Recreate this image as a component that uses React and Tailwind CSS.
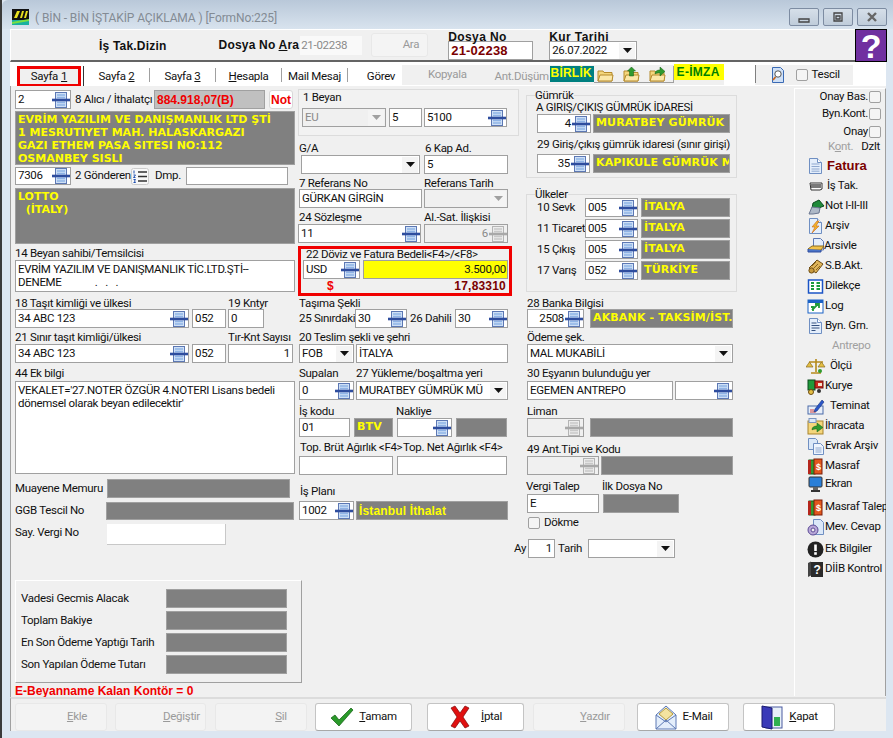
import React from "react";

const LB = "font-['Liberation_Sans',sans-serif]";

const Spin = ({ off }) => (
  <svg width="18" height="16" viewBox="0 0 18 16" className="shrink-0">
    <rect x="3.500" y="0.500" width="11" height="15" fill={off ? "#ececec" : "#cfe0f6"} stroke={off ? "#b4b4b4" : "#5c78b4"} />
    <path d="M5 3h8M5 5.500h8M5 10.500h8M5 13h8" stroke={off ? "#c8c8c8" : "#8fb4e6"} strokeWidth="1.300" />
    <rect x="0" y="6.700" width="18" height="2.600" fill={off ? "#a8a8a8" : "#2e4d9e"} />
  </svg>
);

const Arrow = ({ off }) => (
  <span className="w-[16px] h-[16px] bg-[#f4f4f4] flex items-center justify-center shrink-0">
    <svg width="9" height="5" viewBox="0 0 9 5"><path d="M0 0h9L4.500 5z" fill={off ? "#a0a0a0" : "#111"} /></svg>
  </span>
);

const Label = ({ c = "", children }) => <div className={`leading-[14px] whitespace-nowrap text-[#111] ${c}`}>{children}</div>;

const Input = ({ c = "", children }) => (
  <div className={`h-[19px] border border-[#a0a0a0] bg-white flex items-center px-[2px] text-[#111] whitespace-nowrap overflow-hidden shrink-0 ${c}`}>{children}</div>
);

const SpinField = ({ c = "", v, right, off }) => (
  <div className={`h-[19px] border border-[#a0a0a0] flex items-center pl-[2px] whitespace-nowrap overflow-hidden shrink-0 ${off ? "bg-[#f0f0f0] text-[#8a8a8a]" : "bg-white text-[#111]"} ${c}`}>
    <span className={`flex-1 min-w-0 ${right ? "text-right pr-[1px]" : ""}`}>{v}</span>
    <Spin off={off} />
  </div>
);

const Select = ({ c = "", v, off }) => (
  <div className={`h-[19px] border border-[#a0a0a0] flex items-center pl-[2px] pr-[1px] whitespace-nowrap overflow-hidden shrink-0 ${off ? "bg-[#f0f0f0] text-[#8a8a8a]" : "bg-white text-[#111]"} ${c}`}>
    <span className="flex-1 min-w-0 overflow-hidden">{v}</span>
    <Arrow off={off} />
  </div>
);

const Gray = ({ c = "", children }) => (
  <div className={`h-[19px] bg-[#808080] border border-[#a0a0a0] px-[2px] text-[#ffff00] font-bold text-[11px] tracking-[0.15px] whitespace-nowrap overflow-hidden flex items-center shrink-0 font-['DejaVu_Sans',sans-serif] ${c}`}>{children}</div>
);

const Check = ({ c = "" }) => <span className={`block w-[12px] h-[12px] border border-[#a0a0a0] bg-[#f4f4f4] rounded-[2px] shrink-0 ${c}`} />;

const Folder = ({ arrow }) => (
  <svg width="17" height="15" viewBox="0 0 17 15">
    <path d="M1 4h5l1 1.500h8V14H1z" fill="#f4d67c" stroke="#b58a2c" />
    <path d="M1 14l2-6h13l-1 6z" fill="#fbe7a8" stroke="#b58a2c" />
    {arrow === "up" && <path d="M8.500 0l4 4h-2v5h-4V4h-2z" fill="#2f9a2f" stroke="#155d15" strokeWidth=".5" />}
    {arrow === "right" && <path d="M6 7c0-3 2-4 5-4V0l5 4.500L11 9V6c-2 0-4 0-5 1z" fill="#2f9a2f" stroke="#155d15" strokeWidth=".5" />}
  </svg>
);

const Doc = ({ children }) => (
  <>
    <path d="M2.500.500h8l4 4v11h-12z" fill="#e4eefb" stroke="#6f8fc2" />
    <path d="M10.500.500v4h4" fill="#fff" stroke="#6f8fc2" />
    {children}
  </>
);
const Ic = ({ children, w = 17 }) => <svg width={w} height="17" viewBox={`0 0 ${w} 17`} className="shrink-0">{children}</svg>;

const icons = {
  fatura: <Ic><Doc><path d="M4.500 6h8M4.500 8.500h8M4.500 11h8M4.500 13.200h8" stroke="#8fa8cf" /></Doc></Ic>,
  istak: <Ic><path d="M3 5h12v6l-2 1H4z" fill="#fff" stroke="#333" /><path d="M5 6v4M7 6v4M9 6v4M11 6v4M13 6v4" stroke="#222" strokeWidth="1.200" /></Ic>,
  not: <Ic w="18"><path d="M4 16l2-11 6-3 5 6-8 3z" fill="#1f8a3a" stroke="#0b4a1d" /><path d="M2 16l3-7 8 1-1 5-6 1z" fill="#aeb9c8" stroke="#6a7690" /></Ic>,
  arsiv: <Ic><Doc /><path d="M10 3L5 9h3l-3 6 7-7H9l3-5z" fill="#f2b52c" stroke="#c9651b" strokeWidth=".6" /></Ic>,
  arsivle: <Ic w="18"><path d="M6.500.500h7l3 3V12h-10z" fill="#e4eefb" stroke="#5c78b4" /><path d="M1 11l4-3h12l-3 4H3z" fill="#f1c24b" stroke="#8a6a1e" /><path d="M1 11v3h13v-2" fill="#4a74c8" stroke="#2e4d9e" /></Ic>,
  sb: <Ic w="18"><path d="M2 10l8-8 6 4-7 9z" fill="#dfb458" stroke="#6e4c12" /><path d="M5 8l4-4M7 10l4-4M9 12l4-4" stroke="#8a6420" /><circle cx="4.500" cy="12.500" r="2.600" fill="#c89a3e" stroke="#6e4c12" /></Ic>,
  dilekce: <Ic><rect x="1.500" y="2" width="14" height="13" fill="#fff" stroke="#1b54c6" strokeWidth="1.500" /><path d="M4 5h3M4 8h3M4 11h3M9.500 5h3.500M9.500 8h3.500M9.500 11h3.500" stroke="#1a9a3a" strokeWidth="1.800" /></Ic>,
  log: <Ic><rect x="1" y="2" width="15" height="13" fill="#fff" stroke="#1b62c6" /><rect x="1" y="2" width="15" height="3" fill="#1b62c6" /><path d="M4 9h2v4M5 12l6-6M8 6h4v4" stroke="#1f9a3a" strokeWidth="1.800" fill="none" /></Ic>,
  byn: <Ic><Doc><path d="M4.500 5h5M4.500 7.500h8M4.500 10h8M4.500 12.500h4" stroke="#34507f" /></Doc></Ic>,
  olcu: <Ic w="20"><path d="M10 1v13M3 4h14M5 15h10" stroke="#b58a1c" strokeWidth="1.600" /><path d="M0 9h7L3.500 4zM12 9h7l-3.500-5z" fill="#e4bf44" stroke="#8a6a1e" strokeWidth=".7" /><circle cx="14" cy="13" r="2" fill="#2f9a2f" /></Ic>,
  kurye: <Ic w="18"><rect x="1" y="2" width="7" height="10" fill="#1f9a3a" stroke="#0b4a1d" /><rect x="8" y="3" width="8" height="7" fill="#c92a1e" stroke="#6e120c" /><rect x="11" y="5" width="4" height="3" fill="#f7e4cc" /><circle cx="4" cy="14" r="2.500" fill="#e4bf44" stroke="#6e4c12" /><circle cx="12" cy="13" r="2" fill="#333" /></Ic>,
  teminat: <Ic w="18"><rect x="1" y="8" width="15" height="8" fill="#e8eef8" stroke="#4a6aa8" /><path d="M3 12h4M3 14h6" stroke="#d04040" /><path d="M8 11l7-9 2 2-7 9-3 1z" fill="#2a55c8" stroke="#17347c" strokeWidth=".6" /></Ic>,
  ihracat: <Ic w="18"><rect x="1" y="3" width="15" height="13" fill="#f4d67c" stroke="#a8832c" /><rect x="2" y="0.500" width="7" height="4" fill="#dbe8f8" stroke="#7a94c0" /><path d="M5 12c0-3 2-4 5-4V5l6 4.500L10 14v-3c-2 0-4 0-5 1z" fill="#2f9a2f" stroke="#155d15" strokeWidth=".5" /></Ic>,
  evrak: <Ic w="18"><path d="M1.500.500h7l2 2v9h-9z" fill="#dbe8f8" stroke="#6f8fc2" /><path d="M6.500 5.500h7l3 3v8h-10z" fill="#eef4fd" stroke="#6f8fc2" /><path d="M8.500 10h6M8.500 12h6M8.500 14h6" stroke="#8fa8cf" /></Ic>,
  masraf: <Ic><rect x="2" y="2" width="6" height="14" fill="#2f9a2f" stroke="#155d15" /><rect x="7" y="1" width="8" height="15" fill="#e2571e" stroke="#7a1e0a" /><rect x="1" y="2" width="3" height="14" fill="#b5261c" /><text x="9" y="12" fontSize="9" fontWeight="700" fill="#fff" fontFamily="Liberation Sans">$</text></Ic>,
  ekran: <Ic><rect x="2" y="1" width="13" height="10" rx="1" fill="#2a7fd8" stroke="#333" /><rect x="6" y="11" width="5" height="3" fill="#666" /><rect x="4" y="14" width="9" height="2" fill="#333" /></Ic>,
  mev: <Ic w="18"><path d="M6.500.500h7l3 3v12h-10z" fill="#dbe8f8" stroke="#6f8fc2" /><circle cx="6" cy="11" r="5" fill="#b8a8d8" stroke="#5c4a96" /><circle cx="6" cy="11" r="2" fill="#eee" stroke="#5c4a96" /></Ic>,
  ek: <Ic><circle cx="8.500" cy="8.500" r="8" fill="#222" /><rect x="7.200" y="3.500" width="2.600" height="6.500" fill="#fff" /><rect x="7.200" y="11.200" width="2.600" height="2.600" fill="#fff" /></Ic>,
  diib: <Ic><path d="M1 2l3-1.500v14L1 16z" fill="#444" /><rect x="4" y="1" width="12" height="15" fill="#2a2a2a" /><text x="6.500" y="13" fontSize="12" fontWeight="700" fill="#fff" fontFamily="Liberation Sans">?</text></Ic>,
};

const side = [
  ["mt-[3px]", "fatura", <span className={`font-bold text-[#7b0000] text-[13px] tracking-normal ${LB}`}>Fatura</span>, 18],
  ["", "istak", "İş Tak.", 18],
  ["", "not", "Not I-II-III", 14],
  ["", "arsiv", "Arşiv", 16],
  ["", "arsivle", "Arsivle", 13],
  ["", "sb", "S.B.Akt.", 14],
  ["", "dilekce", "Dilekçe", 16],
  ["", "log", "Log", 16],
  ["", "byn", "Byn. Grn.", 16],
  ["", null, <span className="text-[#a0a0a0] pl-[7px]">Antrepo</span>, 16],
  ["", "olcu", <span className="pl-[5px]">Ölçü</span>, 14],
  ["", "kurye", "Kurye", 14],
  ["", "teminat", <span className="pl-[3px]">Teminat</span>, 18],
  ["", "ihracat", "İhracata", 15],
  ["", "evrak", "Evrak Arşiv", 15],
  ["", "masraf", "Masraf", 16],
  ["-mt-[2px]", "ekran", "Ekran", 16],
  ["mt-[3px]", "masraf", "Masraf Talep", 16],
  ["", "mev", "Mev. Cevap", 14],
  ["mt-[2px]", "ek", "Ek Bilgiler", 16],
  ["", "diib", "DİİB Kontrol", 16],
];

const Btn = ({ c = "", off, icon, children }) => (
  <div className={`h-[28px] rounded-[3px] border flex items-center justify-center gap-[5px] shrink-0 ${off ? "bg-[#f3f3f3] border-[#e8e8e8] text-[#9a9a9a]" : "bg-white border-[#c4c4c4] border-b-[#a8a8a8] text-[#111]"} ${c}`}>
    {icon}
    <span>{children}</span>
  </div>
);

const Group = ({ title, c = "", children }) => (
  <div className={`relative border border-[#dcdcdc] ${c}`}>
    <span className="absolute -top-[8px] left-[8px] bg-[#f0f0f0] leading-[14px] text-[#111]">{title}</span>
    {children}
  </div>
);

export default function App() {
  return (
    <div className="w-[893px] h-[738px] overflow-hidden flex bg-[#dce6f1] font-['Roboto',sans-serif] text-[11.5px] tracking-[-0.3px] text-[#111]">
      <div className="w-[2px] h-full bg-[#3a3a3a]" />
      <div className="w-[891px] h-full flex flex-col">
        {/* title bar */}
        <div className="h-[29px] shrink-0 flex items-start bg-gradient-to-b from-[#b9c8d9] to-[#d8e3ee] rounded-tl-[6px]">
          <svg width="17" height="16" viewBox="0 0 17 16" className="ml-[10px] mt-[9px] shrink-0">
            <rect width="17" height="11" fill="#111" />
            <path d="M0 11h17v5H0z" fill="#19b0a0" />
            <path d="M2 9l3-7h3L5 9zM8 9l2-7h2l-2 7zM12 9l2-7h2l-2 7z" fill="#e8e020" />
            <path d="M0 13l17-3v2L0 15z" fill="#7adf40" />
          </svg>
          <span className="ml-[6px] mt-[10px] text-[12px] tracking-[-0.1px] leading-[16px] text-[#838b94] whitespace-nowrap">( BİN - BİN İŞTAKİP AÇIKLAMA ) [FormNo:225]</span>
          <div className="ml-auto mr-[6px] mt-[8px] flex gap-[4px]">
            {["M5 10h10v3H5z", "M6 4h8v8H6zM8 7h4v3H8z", "M6 4l8 8M14 4l-8 8"].map((d, i) => (
              <div key={i} className="w-[30px] h-[18px] rounded-[2px] border border-[#7d8ca2] bg-gradient-to-b from-[#d6dfe9] to-[#bfccda] flex items-center justify-center">
                <svg width="20" height="16" viewBox="0 0 20 16"><path d={d} fill="none" stroke={i === 2 ? "#666" : "#444"} strokeWidth={i === 2 ? 2.400 : 1.300} /></svg>
              </div>
            ))}
          </div>
        </div>

        <div className="flex-1 flex flex-col ml-[8px] mr-[7px] min-h-0">
          {/* top toolbar */}
          <div className={`h-[33px] shrink-0 bg-[#f0f0f0] border-l border-t border-white border-b-2 border-b-[#646464] flex items-start font-bold text-[12px] ${LB}`}>
            <span className="ml-[88px] mt-[9px] leading-[14px] tracking-[0.2px]">İş Tak.Dizin</span>
            <span className="ml-[52px] mt-[8px] leading-[14px] tracking-[0.2px]">Dosya No <u>A</u>ra</span>
            <div className="ml-[1px] mt-[6px] w-[62px] h-[19px] bg-[#f9f9f9] font-normal text-[#8a8a8a] text-[11.5px] leading-[18px] pl-[1px] font-['Roboto',sans-serif]">21-02238</div>
            <div className="ml-[9px] mt-[3px] w-[57px] h-[24px] rounded-[3px] bg-[#f4f4f4] border border-[#e8e8e8] font-normal text-[#9a9a9a] text-[11.5px] flex items-center justify-end pr-[8px] font-['Roboto',sans-serif]">Ara</div>
            <div className="ml-[20px] w-[85px] shrink-0">
              <div className="leading-[14px] mt-[-1px] pt-[1px] tracking-[0.4px]">Dosya No</div>
              <div className="w-[85px] h-[19px] bg-white border border-[#a0a0a0] text-[#7b0000] text-[13px] leading-[17px] pl-[2px] mt-[-3px] tracking-[0.2px]">21-02238</div>
            </div>
            <div className="ml-[16px] w-[88px] shrink-0">
              <div className="leading-[14px] mt-[-1px] pt-[1px] tracking-[0.4px]">Kur Tarihi</div>
              <div className="mt-[-3px]"><Select c="w-[88px] font-normal text-[#111] text-[11.5px] tracking-[-0.3px] font-['Roboto',sans-serif]" v="26.07.2022" /></div>
            </div>
            <div className="ml-auto mr-[-1px] mt-[-1px] w-[32px] h-[33px] bg-[#7030a0] border border-black flex items-center justify-center text-white text-[34px] leading-none font-bold">?</div>
          </div>

          {/* tabs */}
          <div className="h-[24px] shrink-0 bg-white flex items-start">
            <div className="w-[392px] h-[24px] flex items-start shrink-0">
              <div className="ml-[7px] mt-[4px] w-[64px] h-[21px] border-[3px] border-[#f00000] bg-[#f0f0f0] flex items-center justify-center whitespace-nowrap">Sayfa <u className="ml-[3px]">1</u></div>
              <div className="ml-[2px] mt-[4px] w-[1px] h-[20px] bg-[#333]" />
              {[["Sayfa ", "2", ""], ["Sayfa ", "3", ""], ["", "H", "esapla"]].map((t, i) => (
                <React.Fragment key={i}>
                  <div className="w-[65px] mt-[5px] h-[19px] flex items-center justify-center whitespace-pre">{t[0]}<u>{t[1]}</u>{t[2]}</div>
                  <div className="mt-[6px] w-[1px] h-[14px] bg-[#a0a0a0]" />
                </React.Fragment>
              ))}
              <div className="w-[65px] mt-[5px] h-[19px] flex items-center justify-center whitespace-nowrap">Mail Mesaj</div>
              <div className="mt-[6px] w-[1px] h-[14px] bg-[#a0a0a0]" />
              <div className="w-[54px] mt-[5px] h-[19px] pl-[12px] flex items-center justify-center">Görev</div>
            </div>
            <div className="h-[20px] mt-[3px] flex-1 flex items-start bg-[#f0f0f0] text-[#9a9a9a]">
              <span className="ml-[26px] mt-[1px] leading-[16px]">Kopyala</span>
              <span className="ml-[28px] mt-[3px] w-[53px] shrink-0 leading-[16px] whitespace-nowrap">Ant.Düşüm</span>
              <div className={`ml-[2px] w-[44px] h-[16px] mt-[1px] bg-[#008080] text-[#ffff00] font-bold text-[12px] leading-[15px] pl-[1px] tracking-[0.2px] ${LB}`}>BİRLİK</div>
              <div className="w-[80px] h-[17px] mt-[1px] border-r border-b border-[#a0a0a0] flex items-center gap-[9px] pl-[3px]">
                <Folder /><Folder arrow="up" /><Folder arrow="right" />
              </div>
              <div className={`w-[50px] h-[16px] -mt-[1px] bg-[#ffff00] text-[#008000] font-bold text-[12px] leading-[16px] pl-[3px] tracking-[0.3px] whitespace-nowrap ${LB}`}>E-İMZA</div>
              <div className="w-[31px] h-[20px] bg-white" />
              <div className="w-[1px] h-[18px] bg-[#808080]" />
              <div className="w-[97px] h-[19px] flex items-center pl-[14px] text-[#111]">
                <svg width="16" height="16" viewBox="0 0 16 16" className="shrink-0"><path d="M2.500.500h8l3 3v12h-11z" fill="#cfe0f6" stroke="#3a6ab4" /><circle cx="8" cy="7" r="3.200" fill="#fff" stroke="#555" /><path d="M5.500 10L3 13" stroke="#c9651b" strokeWidth="1.800" /></svg>
                <Check c="ml-[10px]" />
                <span className="ml-[4px]">Tescil</span>
              </div>
              <div className="flex-1 h-[20px] bg-white" />
            </div>
          </div>

          {/* body */}
          <div className="h-[611px] shrink-0 bg-[#f0f0f0] border-l border-[#a0a0a0] flex items-start overflow-hidden">
            {/* column 1 */}
            <div className="w-[280px] ml-[4px] pt-[4px] shrink-0">
              <div className="flex items-center h-[19px]">
                <SpinField c="w-[56px]" v="2" />
                <span className="ml-[4px] w-[79px] shrink-0 whitespace-nowrap">8 Alıcı / İthalatçı</span>
                <div className={`w-[111px] h-[19px] bg-[#c0c0c0] border border-[#a0a0a0] text-[#f00000] font-bold text-[12px] tracking-normal flex items-center pl-[2px] whitespace-nowrap shrink-0 ${LB}`}>884.918,07(B)</div>
                <div className={`ml-[4px] w-[24px] h-[19px] border border-[#d8d8d8] rounded-[3px] bg-white text-[#f00000] font-bold text-[12px] tracking-normal flex items-center justify-center shrink-0 ${LB}`}>Not</div>
              </div>
              <div className="mt-[2px] h-[54px] bg-[#808080] border border-[#a0a0a0] pl-[2px] pt-[1px] text-[#ffff00] font-bold text-[11px] tracking-normal leading-[13px] whitespace-pre font-['DejaVu_Sans',sans-serif]">{"EVRİM YAZILIM VE DANIŞMANLIK LTD ŞTİ\n1 MESRUTIYET MAH. HALASKARGAZI\nGAZI ETHEM PASA SITESI NO:112\nOSMANBEY SISLI"}</div>
              <div className="mt-[2px] flex items-center h-[18px]">
                <SpinField c="w-[56px] !h-[18px]" v="7306" />
                <span className="ml-[4px] whitespace-nowrap w-[56px] shrink-0">2 Gönderen</span>
                <svg width="18" height="17" viewBox="0 0 18 17" className="shrink-0"><rect x=".5" y=".5" width="17" height="16" rx="2" fill="#f8f8f8" stroke="#ccc" /><path d="M7 4h9M7 8.500h9M7 13h9" stroke="#333" strokeWidth="1.400" /><path d="M3 2.500v3M2.500 7h2l-2 2.500h2M2.500 11.500h2l-1 1.500 1 1.500h-2" stroke="#2050b0" fill="none" /></svg>
                <span className="ml-[6px] w-[31px] shrink-0">Dmp.</span>
                <Input c="!h-[18px] w-[102px]" />
              </div>
              <div className="mt-[3px] h-[56px] bg-[#808080] border border-[#a0a0a0] pl-[2px] pt-[1px] text-[#ffff00] font-bold text-[11px] tracking-normal leading-[13px] whitespace-pre font-['DejaVu_Sans',sans-serif]">{"LOTTO\n  (İTALY)"}</div>
              <Label c="mt-[2px] h-[14px]">14 Beyan sahibi/Temsilcisi</Label>
              <div className="h-[32px] bg-white border border-[#a0a0a0] px-[2px] py-[2px] leading-[13px] whitespace-pre overflow-hidden">{"EVRİM YAZILIM VE DANIŞMANLIK TİC.LTD.ŞTİ--\nDENEME             .   .   ."}</div>
              <div className="mt-[4px] flex h-[13px]">
                <Label c="w-[213px]">18 Taşıt kimliği ve ülkesi</Label>
                <Label>19 Kntyr</Label>
              </div>
              <div className="flex items-center h-[19px]">
                <SpinField c="w-[174px]" v="34 ABC 123" />
                <Input c="w-[34px] ml-[3px]">052</Input>
                <Input c="w-[36px] ml-[2px]">0</Input>
              </div>
              <div className="mt-[2px] flex h-[14px]">
                <Label c="w-[213px]">21 Sınır taşıt kimliği/ülkesi</Label>
                <Label>Tır-Knt Sayısı</Label>
              </div>
              <div className="flex items-center h-[19px]">
                <SpinField c="w-[174px]" v="34 ABC 123" />
                <Input c="w-[34px] ml-[3px]">052</Input>
                <Input c="w-[65px] ml-[2px] justify-end">1</Input>
              </div>
              <Label c="mt-[3px] h-[15px]">44 Ek bilgi</Label>
              <div className="h-[93px] bg-white border border-[#a0a0a0] px-[2px] pt-[2px] leading-[13px]">VEKALET='27.NOTER ÖZGÜR 4.NOTERI Lisans bedeli dönemsel olarak beyan edilecektir'</div>
              <div className="mt-[5px] flex items-center h-[19px]">
                <span className="w-[92px] shrink-0 whitespace-nowrap">Muayene Memuru</span>
                <Gray c="w-[183px]" />
              </div>
              <div className="mt-[4px] flex items-center h-[18px]">
                <span className="w-[91px] shrink-0 whitespace-nowrap">GGB Tescil No</span>
                <Gray c="w-[188px] !h-[18px]" />
              </div>
              <div className="mt-[4px] flex items-start h-[21px]">
                <span className="w-[92px] shrink-0 whitespace-nowrap leading-[16px]">Say. Vergi No</span>
                <div className="w-[119px] h-[21px] bg-white border-b border-r border-[#c8c8c8]" />
              </div>
              <div className="mt-[35px] w-[287px] h-[103px] border-l border-t border-white border-r border-b border-r-[#a0a0a0] border-b-[#a0a0a0] pt-[8px] pl-[5px]">
                {["Vadesi Gecmis Alacak", "Toplam Bakiye", "En Son Ödeme Yaptığı Tarih", "Son Yapılan Ödeme Tutarı"].map((t, i) => (
                  <div key={i} className="flex items-center h-[19px] mb-[3px]">
                    <span className="w-[145px] shrink-0 whitespace-nowrap">{t}</span>
                    <Gray c="w-[121px]" />
                  </div>
                ))}
              </div>
              <div className={`mt-[1px] h-[14px] leading-[14px] text-[#f00000] font-bold text-[12px] tracking-normal whitespace-nowrap ${LB}`}>E-Beyanname Kalan Kontör = 0</div>
            </div>

            {/* column 2 */}
            <div className="w-[221px] ml-[3px] pt-[3px] shrink-0">
              <div className="h-[47px] border border-[#dcdcdc] bg-[#f2f2f2]">
                <Label c="ml-[4px] h-[14px]">1 Beyan</Label>
                <div className="mt-[4px] flex ml-[3px]">
                  <Select c="w-[84px]" v="EU" off />
                  <Input c="w-[33px] ml-[3px]">5</Input>
                  <SpinField c="w-[83px] ml-[2px]" v="5100" />
                </div>
              </div>
              <div className="mt-[5px] flex h-[14px]">
                <Label c="w-[126px] ml-[1px]">G/A</Label>
                <Label>6 Kap Ad.</Label>
              </div>
              <div className="flex">
                <Select c="w-[119px] ml-[3px]" v="" />
                <Input c="w-[84px] ml-[4px]">5</Input>
              </div>
              <div className="mt-[2px] flex h-[13px]">
                <Label c="w-[125px] ml-[1px]">7 Referans No</Label>
                <Label>Referans Tarih</Label>
              </div>
              <div className="flex ml-[1px]">
                <Input c="w-[123px]">GÜRKAN GİRGİN</Input>
                <Select c="w-[84px] ml-[2px]" v="" off />
              </div>
              <div className="mt-[2px] flex h-[14px]">
                <Label c="w-[125px] ml-[1px]">24 Sözleşme</Label>
                <Label>Al.-Sat. İlişkisi</Label>
              </div>
              <div className="flex">
                <SpinField c="w-[123px]" v="11" />
                <SpinField c="w-[84px] ml-[3px]" v="6" right off />
              </div>
              <div className="mt-[3px] w-[214px] h-[50px] border-[3px] border-[#f00000]">
                <div className="h-[11px] pl-[5px] leading-[10px] whitespace-nowrap">22 Döviz ve Fatura Bedeli&lt;F4&gt;/&lt;F8&gt;</div>
                <div className="flex ml-[2px]">
                  <SpinField c="w-[57px]" v="USD" />
                  <div className="ml-[3px] w-[145px] h-[19px] bg-[#ffff00] border border-[#a0a0a0] text-right pr-[1px] leading-[17px]">3.500,00</div>
                </div>
                <div className={`flex items-center justify-between h-[14px] pl-[26px] pr-[3px] tracking-normal ${LB}`}>
                  <span className="text-[#f00000] font-bold text-[12px] leading-[14px]">$</span>
                  <span className="text-[#7b0000] font-bold text-[12px] tracking-[0.2px] leading-[14px]">17,83310</span>
                </div>
              </div>
              <Label c="h-[13px] ml-[1px]">Taşıma Şekli</Label>
              <div className="flex items-center ml-[1px] h-[19px]">
                <span className="w-[56px] shrink-0 whitespace-nowrap">25 Sınırdaki</span>
                <SpinField c="w-[52px]" v="30" />
                <span className="ml-[3px] w-[45px] shrink-0 whitespace-nowrap">26 Dahili</span>
                <SpinField c="w-[53px]" v="30" />
              </div>
              <Label c="mt-[2px] h-[14px] ml-[1px]">20 Teslim şekli ve şehri</Label>
              <div className="flex ml-[1px]">
                <Select c="w-[55px]" v="FOB" />
                <Input c="w-[152px] ml-[2px]">İTALYA</Input>
              </div>
              <div className="mt-[3px] flex h-[15px] ml-[1px]">
                <Label c="w-[57px]">Supalan</Label>
                <Label>27 Yükleme/boşaltma yeri</Label>
              </div>
              <div className="flex ml-[1px]">
                <SpinField c="w-[55px]" v="0" />
                <Select c="w-[152px] ml-[2px]" v="MURATBEY GÜMRÜK MÜ" />
              </div>
              <div className="mt-[4px] flex h-[14px] ml-[1px]">
                <Label c="w-[97px]">İş kodu</Label>
                <Label>Nakliye</Label>
              </div>
              <div className="flex ml-[1px]">
                <Input c="w-[51px]">01</Input>
                <Gray c="w-[39px] ml-[4px]">BTV</Gray>
                <SpinField c="w-[55px] ml-[4px]" v="" />
                <Gray c="w-[51px] ml-[4px]" />
              </div>
              <div className="mt-[3px] flex h-[16px] ml-[2px]">
                <Label c="w-[103px]">Top. Brüt Ağırlık &lt;F4&gt;</Label>
                <Label>Top. Net Ağırlık &lt;F4&gt;</Label>
              </div>
              <div className="flex ml-[1px]">
                <Input c="w-[94px]" />
                <Input c="w-[110px] ml-[4px]" />
              </div>
              <Label c="mt-[9px] h-[17px] ml-[2px]">İş Planı</Label>
              <div className="flex ml-[1px]">
                <SpinField c="w-[55px]" v="1002" />
                <Gray c="w-[152px] ml-[2px] !font-['Liberation_Sans',sans-serif] !text-[12px]">İstanbul İthalat</Gray>
              </div>
            </div>

            {/* column 3 */}
            <div className="w-[211px] ml-[7px] pt-[9px] shrink-0">
              <Group title="Gümrük" c="h-[83px] pt-[4px]">
                <Label c="ml-[9px] h-[14px]">A GİRİŞ/ÇIKIŞ GÜMRÜK İDARESİ</Label>
                <div className="flex ml-[10px]">
                  <SpinField c="w-[54px]" v="4" right />
                  <Gray c="w-[137px] ml-[2px]">MURATBEY GÜMRÜK MÜDÜRLÜĞÜ</Gray>
                </div>
                <Label c="ml-[10px] mt-[4px] h-[14px]">29 Giriş/çıkış gümrük idaresi (sınır girişi)</Label>
                <div className="flex ml-[10px] mt-[3px]">
                  <SpinField c="w-[53px]" v="35" right />
                  <Gray c="w-[137px] ml-[3px]">KAPIKULE GÜMRÜK MÜDÜRLÜĞÜ</Gray>
                </div>
              </Group>
              <Group title="Ülkeler" c="mt-[16px] h-[98px] pt-[3px]">
                {[["10 Sevk", "005", "İTALYA"], ["11 Ticaret", "005", "İTALYA"], ["15 Çıkış", "005", "İTALYA"], ["17 Varış", "052", "TÜRKİYE"]].map((r, i) => (
                  <div key={i} className="flex items-center h-[19px] mb-[2px] ml-[10px]">
                    <span className="w-[48px] shrink-0 whitespace-nowrap">{r[0]}</span>
                    <SpinField c="w-[53px]" v={r[1]} />
                    <Gray c="w-[89px] ml-[3px]">{r[2]}</Gray>
                  </div>
                ))}
              </Group>
              <Label c="mt-[4px] h-[13px] ml-[1px]">28 Banka Bilgisi</Label>
              <div className="flex ml-[1px]">
                <SpinField c="w-[57px]" v="2508" right />
                <Gray c="w-[143px] ml-[6px]">AKBANK - TAKSİM/İST.</Gray>
              </div>
              <Label c="mt-[2px] h-[14px] ml-[1px]">Ödeme şek.</Label>
              <Select c="w-[206px] ml-[1px]" v="MAL MUKABİLİ" />
              <Label c="mt-[3px] h-[15px] ml-[1px]">30 Eşyanın bulunduğu yer</Label>
              <div className="flex ml-[1px]">
                <Input c="w-[146px]">EGEMEN ANTREPO</Input>
                <SpinField c="w-[58px] ml-[2px]" v="" />
              </div>
              <Label c="mt-[4px] h-[14px] ml-[1px]">Liman</Label>
              <div className="flex ml-[1px]">
                <SpinField c="w-[57px]" v="" off />
                <Gray c="w-[143px] ml-[6px]" />
              </div>
              <Label c="mt-[5px] h-[14px] ml-[1px]">49 Ant.Tipi ve Kodu</Label>
              <div className="flex ml-[1px]">
                <SpinField c="w-[72px]" v="" off />
                <Gray c="w-[132px] ml-[2px]" />
              </div>
              <div className="mt-[4px] flex h-[15px]">
                <Label c="w-[76px]">Vergi Talep</Label>
                <Label>İlk Dosya No</Label>
              </div>
              <div className="flex ml-[1px]">
                <Input c="w-[72px]">E</Input>
                <Gray c="w-[76px] ml-[4px]" />
              </div>
              <div className="mt-[4px] flex items-center ml-[2px] h-[12px]">
                <Check />
                <span className="ml-[4px]">Dökme</span>
              </div>
              <div className="mt-[10px] flex items-center -ml-[12px] h-[19px]">
                <span className="w-[14px] shrink-0">Ay</span>
                <Input c="w-[27px] justify-end">1</Input>
                <span className="ml-[3px] w-[30px] shrink-0">Tarih</span>
                <Select c="w-[87px]" v="" />
              </div>
            </div>

            {/* sidebar */}
            <div className="ml-[57px] mt-[2px] w-[92px] h-[608px] border-l border-t border-white border-r border-r-[#a0a0a0] shrink-0">
              <div className="flex items-center justify-end pr-[4px] h-[13px] mt-[1px] gap-[1px]"><span>Onay Bas.</span><Check /></div>
              <div className="flex items-center justify-end pr-[4px] h-[13px] mt-[4px] gap-[1px]"><span>Byn.Kont.</span><Check /></div>
              <div className="flex items-center justify-end pr-[4px] h-[13px] mt-[5px] gap-[1px]"><span>Onay</span><Check /></div>
              <div className="flex items-center h-[13px] mt-[2px] pl-[33px]"><span className="text-[#a0a0a0]">K<u>o</u>nt.</span><span className="ml-[8px]">Dzlt</span></div>
              {side.map((s, i) => (
                <div key={i} className={`flex items-center h-[20px] pl-[12px] whitespace-nowrap ${s[0]}`}>
                  <span className="w-[17px] flex justify-center shrink-0">{s[1] && icons[s[1]]}</span>
                  <span className={s[3] === 18 ? "ml-[3px]" : s[3] === 13 ? "ml-[0px]" : "ml-[1px]"}>{s[2]}</span>
                </div>
              ))}
            </div>
          </div>

          {/* buttons */}
          <div className="h-[34px] shrink-0 bg-[#f0f0f0] border-t-2 border-[#dcdcdc] border-l border-l-[#a0a0a0] flex items-start pt-[4px] pl-[4px]">
            <Btn c="w-[92px] pl-[32px]" off><u>E</u>kle</Btn>
            <Btn c="w-[91px] ml-[8px] pl-[42px]" off><u>D</u>eğiştir</Btn>
            <Btn c="w-[92px] ml-[9px] pl-[40px]" off><u>S</u>il</Btn>
            <Btn c="w-[97px] ml-[8px]" icon={<svg width="24" height="20" viewBox="0 0 24 20"><path d="M1 11l4-3 4 5L21 1l2 2L9 19z" fill="#2a9a2a" stroke="#0f5a0f" strokeWidth=".7" /></svg>}><u>T</u>amam</Btn>
            <Btn c="w-[97px] ml-[15px]" icon={<svg width="22" height="24" viewBox="0 0 22 24" className="mr-[5px]"><path d="M2 3l4-2 5 7 5-7 4 2-6 9 6 9-4 2-5-7-5 7-4-2 6-9z" fill="#e01010" stroke="#7a0808" strokeWidth=".7" /></svg>}><u>İ</u>ptal</Btn>
            <Btn c="w-[92px] ml-[9px] pl-[32px]" off><u>Y</u>azdır</Btn>
            <Btn c="w-[92px] ml-[12px]" icon={<svg width="24" height="26" viewBox="0 0 24 26"><path d="M2 11l10-9 10 9v14H2z" fill="#e4eefb" stroke="#5c78b4" /><path d="M5 10l7-6 7 6-7 6z" fill="#f4e3a0" stroke="#b59a3c" /><path d="M2 25l10-9 10 9M2 11l10 7 10-7" fill="none" stroke="#5c78b4" /></svg>}>E-Mail</Btn>
            <Btn c="w-[92px] ml-[14px]" icon={<svg width="24" height="26" viewBox="0 0 24 26"><rect x="6" y="3" width="16" height="21" fill="#e8f0f8" stroke="#4a5aa0" /><rect x="14" y="13" width="6" height="9" fill="#30b050" /><path d="M2 2l10 2v21L2 23z" fill="#3a3ab8" stroke="#1a1a70" /></svg>}><u>K</u>apat</Btn>
          </div>
        </div>
      </div>
    </div>
  );
}
